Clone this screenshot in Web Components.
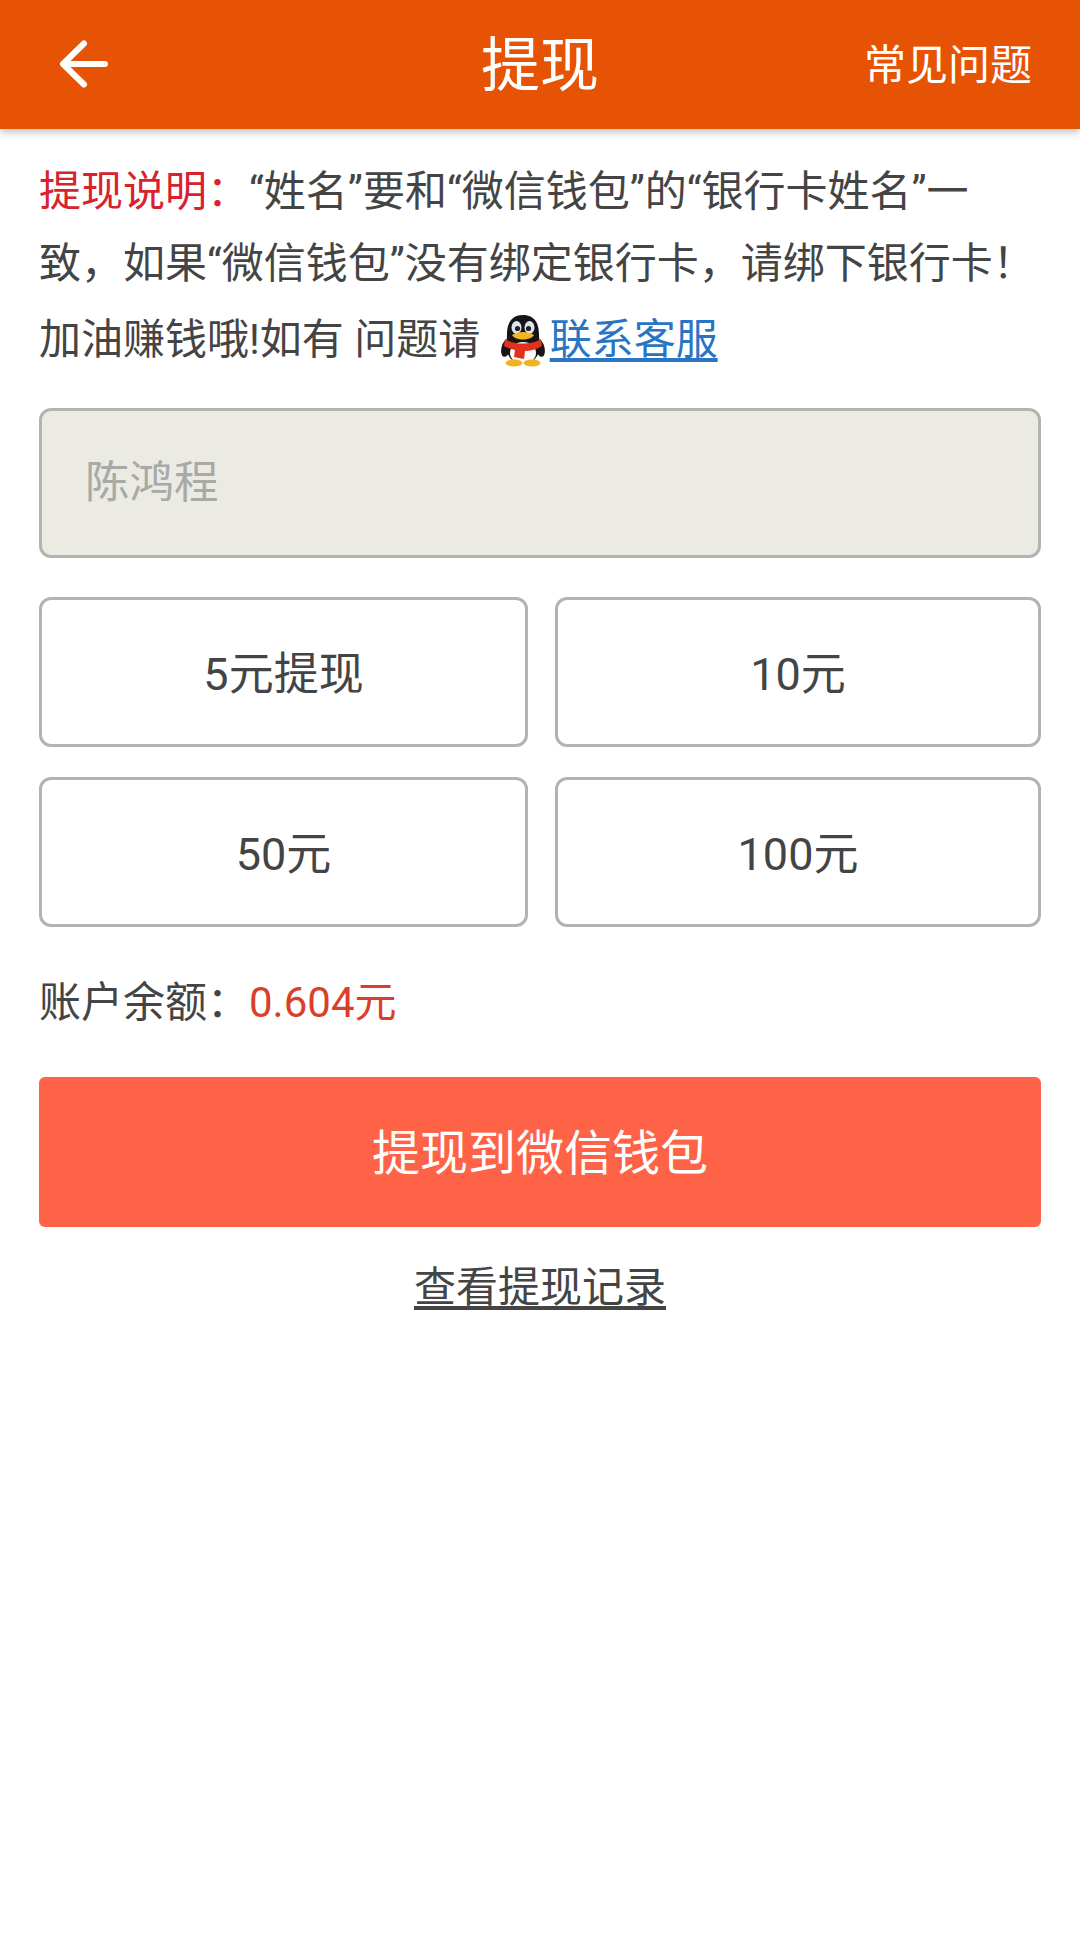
<!DOCTYPE html>
<html lang="zh-CN">
<head>
<meta charset="utf-8">
<title>提现</title>
<style>
  html, body { margin: 0; background: #fff; }
  body { font-family: "Roboto", "Noto Sans CJK SC", sans-serif; color: #444; }
</style>
</head>
<body>
<app-bar title="提现" action="常见问题"></app-bar>
<withdraw-page>
  <withdraw-notice></withdraw-notice>
  <name-field value="陈鸿程"></name-field>
  <amount-grid>
    <amount-option>5元提现</amount-option>
    <amount-option>10元</amount-option>
    <amount-option>50元</amount-option>
    <amount-option>100元</amount-option>
  </amount-grid>
  <account-balance amount="0.604元"></account-balance>
  <submit-button>提现到微信钱包</submit-button>
  <history-link>查看提现记录</history-link>
</withdraw-page>

<script>
class AppBar extends HTMLElement {
  constructor() {
    super();
    this.attachShadow({ mode: 'open' });
  }

  connectedCallback() {
    this.shadowRoot.innerHTML = `
      <style>
        :host{
          display:grid;
          grid-template-columns:1fr auto 1fr;
          align-items:center;
          height:129px;
          padding:0 48px;
          background:#e65305;
          color:#fff;
          box-shadow:0 3px 8px rgba(0,0,0,.25);
          position:relative;
        }
        svg{display:block; margin:-3px 0 0 9px}
        .title{font-size:59px; line-height:129px; padding-top:1px}
        .action{justify-self:end; font-size:42px; line-height:129px}
      </style>
      <svg width="54" height="54" viewBox="0 0 54 54" fill="none" stroke="#fff" stroke-width="6" stroke-linecap="round" stroke-linejoin="round">
        <path d="M6 27H48M27 6.500L6 27L27 47.500"/>
      </svg>
      <div class="title">${this.getAttribute('title')}</div>
      <div class="action">${this.getAttribute('action')}</div>
    `;
  }
}

class WithdrawPage extends HTMLElement {
  constructor() {
    super();
    this.attachShadow({ mode: 'open' });
    this.shadowRoot.innerHTML = `
      <style>
        :host{display:flex; flex-direction:column; padding:27px 39px 0}
      </style>
      <slot></slot>
    `;
  }
}

class WithdrawNotice extends HTMLElement {
  constructor() {
    super();
    this.attachShadow({ mode: 'open' });
    this.shadowRoot.innerHTML = `
      <style>
        :host{display:block; font-size:42px; line-height:72px; height:252px}
        .red{color:#d8232f}
        .last{padding-top:4px}
        a{color:#2a74c4; text-decoration:underline; text-underline-offset:4px}
        svg{display:inline-block; vertical-align:-13px; margin:0 5px 0 10px}
      </style>
      <span class="red">提现说明：</span>“姓名”要和“微信钱包”的“银行卡姓名”一致，如果“微信钱包”没有绑定银行卡，请绑下银行卡！
      <div class="last">加油赚钱哦!如有 问题请
      <svg width="44" height="52" viewBox="0 0 44 52">
        <ellipse cx="5" cy="33" rx="4.500" ry="9" fill="#15151a" transform="rotate(14 5 33)"/>
        <ellipse cx="39" cy="33" rx="4.500" ry="9" fill="#15151a" transform="rotate(-14 39 33)"/>
        <path d="M22 0C10 0 6 9 6 19C6 24 5 30 6 36C8 45 15 49 22 49C29 49 36 45 38 36C39 30 38 24 38 19C38 9 34 0 22 0Z" fill="#14141a"/>
        <ellipse cx="22" cy="38" rx="13" ry="11" fill="#fbfbf8"/>
        <ellipse cx="15.500" cy="12.500" rx="5" ry="6.500" fill="#dfe4f0"/>
        <ellipse cx="28.500" cy="12.500" rx="5" ry="6.500" fill="#dfe4f0"/>
        <circle cx="16.500" cy="13.500" r="2.600" fill="#222"/>
        <circle cx="27.500" cy="13.500" r="2.600" fill="#222"/>
        <path d="M11 20C17 16 27 16 33 20C30 26 14 26 11 20Z" fill="#f5b51f"/>
        <path d="M4 24C13 30 31 30 40 24L41 31C35 35 28 36 24 36L23 44L13 42L14 35C10 34 6 33 3 31Z" fill="#e0301e"/>
        <ellipse cx="13" cy="48" rx="8.500" ry="3.500" fill="#f2b21e"/>
        <ellipse cx="31" cy="48" rx="8.500" ry="3.500" fill="#f2b21e"/>
      </svg><a href="#">联系客服</a></div>
    `;
  }
}

class NameField extends HTMLElement {
  constructor() {
    super();
    this.attachShadow({ mode: 'open' });
  }

  connectedCallback() {
    this.shadowRoot.innerHTML = `
      <style>
        :host{
          display:flex;
          align-items:center;
          box-sizing:border-box;
          height:150px;
          padding:0 0 10px 43px;
          border:3px solid #b3b3b0;
          border-radius:12px;
          background:#ebebe4;
          color:#a9a9a6;
          font-size:44.5px;
        }
      </style>
      ${this.getAttribute('value')}
    `;
  }
}

class AmountGrid extends HTMLElement {
  constructor() {
    super();
    this.attachShadow({ mode: 'open' });
    this.shadowRoot.innerHTML = `
      <style>
        :host{
          display:grid;
          grid-template-columns:489px 486px;
          justify-content:space-between;
          row-gap:30px;
          margin-top:39px;
        }
      </style>
      <slot></slot>
    `;
  }
}

class AmountOption extends HTMLElement {
  constructor() {
    super();
    this.attachShadow({ mode: 'open' });
    this.shadowRoot.innerHTML = `
      <style>
        :host{
          display:flex;
          align-items:center;
          justify-content:center;
          box-sizing:border-box;
          height:150px;
          padding-bottom:4px;
          border:3px solid #b3b3b3;
          border-radius:12px;
          background:#fff;
          color:#444;
          font-size:45px;
        }
      </style>
      <slot></slot>
    `;
  }
}

class AccountBalance extends HTMLElement {
  constructor() {
    super();
    this.attachShadow({ mode: 'open' });
  }

  connectedCallback() {
    this.shadowRoot.innerHTML = `
      <style>
        :host{display:block; margin-top:46px; font-size:42px; line-height:60px; color:#444}
        .num{color:#d9402a}
      </style>
      账户余额：<span class="num">${this.getAttribute('amount')}</span>
    `;
  }
}

class SubmitButton extends HTMLElement {
  constructor() {
    super();
    this.attachShadow({ mode: 'open' });
    this.shadowRoot.innerHTML = `
      <style>
        :host{
          display:flex;
          align-items:center;
          justify-content:center;
          box-sizing:border-box;
          height:150px;
          padding-bottom:6px;
          margin-top:44px;
          border-radius:6px;
          background:#ff6347;
          color:#fff;
          font-size:48px;
        }
      </style>
      <slot></slot>
    `;
  }
}

class HistoryLink extends HTMLElement {
  constructor() {
    super();
    this.attachShadow({ mode: 'open' });
    this.shadowRoot.innerHTML = `
      <style>
        :host{display:block; margin-top:31px; text-align:center; font-size:42px; line-height:60px}
        a{color:#444; text-decoration:underline; text-underline-offset:4px}
      </style>
      <a href="#"><slot></slot></a>
    `;
  }
}

customElements.define('app-bar', AppBar);
customElements.define('withdraw-page', WithdrawPage);
customElements.define('withdraw-notice', WithdrawNotice);
customElements.define('name-field', NameField);
customElements.define('amount-grid', AmountGrid);
customElements.define('amount-option', AmountOption);
customElements.define('account-balance', AccountBalance);
customElements.define('submit-button', SubmitButton);
customElements.define('history-link', HistoryLink);
</script>
</body>
</html>
